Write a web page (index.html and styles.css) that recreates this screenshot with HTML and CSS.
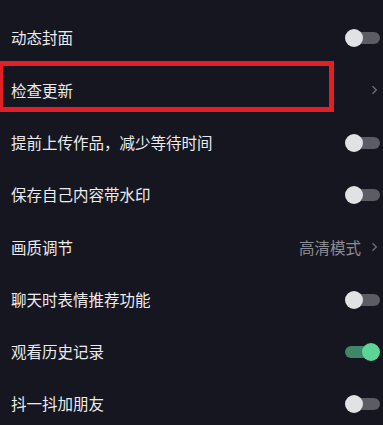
FILE: index.html
```html
<!DOCTYPE html>
<html lang="zh-CN">
<head>
<meta charset="utf-8">
<link rel="stylesheet" href="styles.css">
</head>
<body>
<ul class="list">
  <li class="row"><span class="label">动态封面</span><span class="toggle"><span class="thumb"></span></span></li>
  <li class="row highlight"><span class="label">检查更新</span><span class="chev"><svg width="7" height="10" viewBox="0 0 7 10"><path d="M1.5 1.2 L5.3 5 L1.5 8.8" fill="none" stroke="currentColor" stroke-width="1.3"/></svg></span><span class="mark"></span></li>
  <li class="row"><span class="label">提前上传作品，减少等待时间</span><span class="toggle"><span class="thumb"></span></span></li>
  <li class="row"><span class="label">保存自己内容带水印</span><span class="toggle"><span class="thumb"></span></span></li>
  <li class="row"><span class="label">画质调节</span><span class="value">高清模式</span><span class="chev"><svg width="7" height="10" viewBox="0 0 7 10"><path d="M1.5 1.2 L5.3 5 L1.5 8.8" fill="none" stroke="currentColor" stroke-width="1.3"/></svg></span></li>
  <li class="row"><span class="label">聊天时表情推荐功能</span><span class="toggle"><span class="thumb"></span></span></li>
  <li class="row"><span class="label">观看历史记录</span><span class="toggle on"><span class="thumb"></span></span></li>
  <li class="row"><span class="label">抖一抖加朋友</span><span class="toggle"><span class="thumb"></span></span></li>
</ul>
</body>
</html>
```
FILE: styles.css
```css
html, body {
  margin: 0;
  padding: 0;
  background: #161620;
  width: 383px;
  height: 425px;
  overflow: hidden;
  font-family: "Noto Sans CJK SC", "Noto Sans", sans-serif;
}
.list {
  list-style: none;
  margin: 0;
  padding: 12px 3px 0 11px;
}
.row {
  position: relative;
  display: flex;
  align-items: center;
  height: 52.3px;
  color: #ebebed;
  font-size: 15.5px;
}
.label {
  flex: 1;
  line-height: 1;
}
.value {
  color: #8c8d93;
  margin-right: 10px;
  line-height: 1;
}
.chev {
  display: flex;
  color: #6e6f76;
  margin-right: 2px;
}
.toggle {
  position: relative;
  width: 35px;
  height: 18px;
  display: flex;
  align-items: center;
}
.toggle::before {
  content: "";
  position: absolute;
  left: 2px;
  right: 0;
  height: 12px;
  border-radius: 6px;
  background: #5b5c64;
}
.toggle .thumb {
  position: relative;
  width: 18px;
  height: 18px;
  border-radius: 50%;
  background: #e2e2e4;
}
.toggle.on::before {
  left: 0;
  right: 2px;
  background: #3f8766;
}
.toggle.on .thumb {
  margin-left: auto;
  background: #5dd597;
}
.mark {
  position: absolute;
  left: -13px;
  top: -3px;
  width: 336px;
  height: 51px;
  box-sizing: border-box;
  border: 5px solid #e21f26;
  pointer-events: none;
}
```
